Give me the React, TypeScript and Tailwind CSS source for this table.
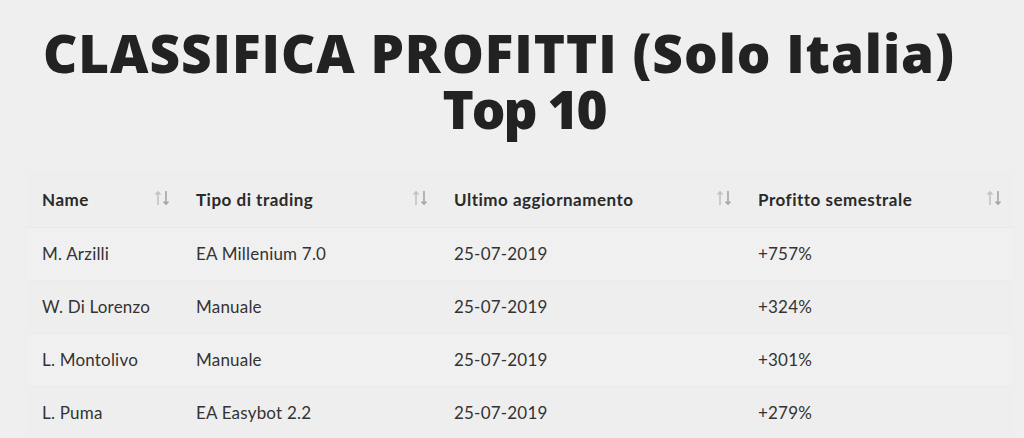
const rows = [
  { name: "M. Arzilli", tipo: "EA Millenium 7.0", data: "25-07-2019", profitto: "+757%" },
  { name: "W. Di Lorenzo", tipo: "Manuale", data: "25-07-2019", profitto: "+324%" },
  { name: "L. Montolivo", tipo: "Manuale", data: "25-07-2019", profitto: "+301%" },
  { name: "L. Puma", tipo: "EA Easybot 2.2", data: "25-07-2019", profitto: "+279%" },
];

const columns = [
  { label: "Name", width: "w-[154px]" },
  { label: "Tipo di trading", width: "w-[258px]" },
  { label: "Ultimo aggiornamento", width: "w-[304px]" },
  { label: "Profitto semestrale", width: "w-[270px]" },
];

function SortIcon() {
  return (
    <svg width="17" height="16" viewBox="0 0 17 16" className="shrink-0">
      <path d="M4 15V2M1.5 4.5L4 2l2.5 2.5" stroke="#c2c2c2" strokeWidth="1.6" fill="none" />
      <path d="M12 1v13M9.5 11.5L12 14l2.5-2.5" stroke="#a5a5a5" strokeWidth="1.6" fill="none" />
    </svg>
  );
}

export default function App() {
  return (
    <div className="min-h-[438px] bg-[#efefef] text-[#2a2a2a] font-['Lato',sans-serif] overflow-hidden">
      <h1 className="pt-[25px] text-center text-[53px] leading-[56px] font-extrabold text-[#222] font-['Open_Sans',sans-serif]">
        <span className="block pr-[26px] tracking-[0.95px]">CLASSIFICA PROFITTI (Solo Italia)</span>
        <span className="block pl-[24px] tracking-[-2px]">Top 10</span>
      </h1>
      <div className="mt-[36px] px-[27px] pr-[11px]">
        <table className="w-[986px] border-collapse table-fixed">
          <thead>
            <tr className="h-[54px] bg-[#eeeeee] border-b border-[#e8e8e8]">
              {columns.map((c) => (
                <th
                  key={c.label}
                  className={`${c.width} text-left font-bold text-[17px] tracking-[0.5px] pl-[15px] pr-[10px]`}
                >
                  <div className="flex items-center justify-between">
                    <span>{c.label}</span>
                    <span className="-mt-[3px]">
                      <SortIcon />
                    </span>
                  </div>
                </th>
              ))}
            </tr>
          </thead>
          <tbody>
            {rows.map((r, i) => (
              <tr
                key={r.name}
                className={`h-[53px] border-b border-[#ebebeb] text-[17px] tracking-[0.2px] text-[#333] ${
                  i % 2 === 0 ? "bg-[#f0f0f0]" : "bg-[#eeeeee]"
                }`}
              >
                <td className="pl-[15px]">{r.name}</td>
                <td className="pl-[15px]">{r.tipo}</td>
                <td className="pl-[15px]">{r.data}</td>
                <td className="pl-[15px]">{r.profitto}</td>
              </tr>
            ))}
          </tbody>
        </table>
      </div>
    </div>
  );
}
